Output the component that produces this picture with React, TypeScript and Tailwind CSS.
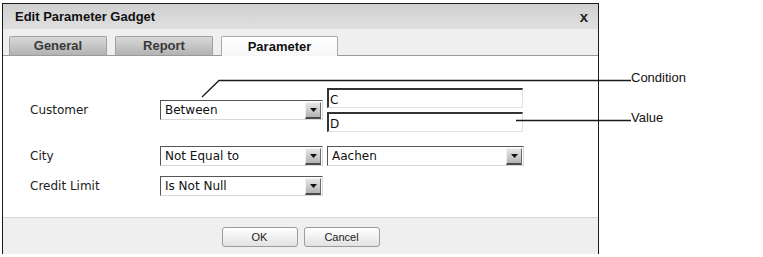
import React from "react";

const ui = { fontFamily: '"DejaVu Sans", Verdana, sans-serif' };
const arial = { fontFamily: '"Liberation Sans", Arial, sans-serif' };

function Arrow() {
  return (
    <div className="flex h-[17px] w-[16px] items-center justify-center border-b-2 border-r border-t border-l border-b-[#4a4a4a] border-r-[#6a6a6a] border-t-[#f4f4f4] border-l-[#f0f0f0] bg-gradient-to-b from-[#e6e6e6] to-[#b4b4b4]">
      <svg width="7" height="4" viewBox="0 0 7 4">
        <path d="M0 0H7L3.5 4Z" fill="#111" />
      </svg>
    </div>
  );
}

function Select({ value, width }: { value: string; width: string }) {
  return (
    <div
      className={`flex h-[20px] ${width} items-center justify-between border-l border-t border-b border-r border-l-[#555] border-t-[#555] border-b-[#d8d8d8] border-r-[#d8d8d8] bg-white pl-[4px] pr-[1px]`}
    >
      <span className="text-[12px] leading-none text-[#111]" style={ui}>
        {value}
      </span>
      <Arrow />
    </div>
  );
}

function TextBox({ value }: { value: string }) {
  return (
    <div className="flex h-[20px] w-[196px] items-end border-l-2 border-t-2 border-b border-r border-l-[#333] border-t-[#333] border-b-[#e2e2e2] border-r-[#e2e2e2] bg-white pb-[1px] pl-[1px]">
      <span className="text-[12px] leading-none text-[#111]" style={ui}>
        {value}
      </span>
    </div>
  );
}

function Tab({ label, active, width }: { label: string; active?: boolean; width: string }) {
  if (active) {
    return (
      <div className={`-mb-px flex h-[20px] ${width} items-center justify-center rounded-t-[2px] border border-b-0 border-[#a8a8a8] bg-gradient-to-b from-white to-[#f7f7f7]`}>
        <span className="text-[13px] font-bold text-[#111]" style={arial}>
          {label}
        </span>
      </div>
    );
  }
  return (
    <div className={`flex h-[19px] ${width} items-center justify-center rounded-t-[2px] border border-b-0 border-[#a0a0a0] bg-gradient-to-b from-[#d8d8d8] via-[#c6c6c6] to-[#b2b2b2]`}>
      <span className="text-[13px] font-bold text-[#3a3a3a]" style={arial}>
        {label}
      </span>
    </div>
  );
}

export default function App() {
  return (
    <div className="relative h-[257px] w-[763px] overflow-hidden bg-white">
      <div className="flex">
        <div className="ml-[2px] mt-[3px] flex w-[597px] flex-col border-x border-t border-[#1a1a1a]">
          <div className="flex h-[25px] items-center justify-between bg-gradient-to-b from-[#d0d0d0] to-[#e0e0e0] pl-[12px] pr-[10px]">
            <span className="text-[13px] font-bold text-[#111]" style={arial}>
              Edit Parameter Gadget
            </span>
            <span className="text-[15px] font-bold leading-none text-[#222]" style={arial}>
              x
            </span>
          </div>

          <div className="flex h-[27px] items-end gap-[8px] border-b border-[#9a9a9a] bg-[#efefef] pl-[6px]">
            <Tab label="General" width="w-[98px]" />
            <Tab label="Report" width="w-[98px]" />
            <Tab label="Parameter" width="w-[117px]" active />
          </div>

          <div className="flex h-[161px] flex-col bg-white pl-[27px] pt-[32px]" style={ui}>
            <div className="flex items-center">
              <span className="w-[130px] text-[12px] text-[#222]">Customer</span>
              <Select value="Between" width="w-[163px]" />
              <div className="ml-[4px] flex flex-col gap-[4px]">
                <TextBox value="C" />
                <TextBox value="D" />
              </div>
            </div>
            <div className="mt-[14px] flex items-center">
              <span className="w-[130px] text-[12px] text-[#222]">City</span>
              <Select value="Not Equal to" width="w-[163px]" />
              <div className="ml-[4px]">
                <Select value="Aachen" width="w-[197px]" />
              </div>
            </div>
            <div className="mt-[10px] flex items-center">
              <span className="w-[130px] text-[12px] text-[#222]">Credit Limit</span>
              <Select value="Is Not Null" width="w-[163px]" />
            </div>
          </div>

          <div className="flex h-[37px] justify-center gap-[6px] border-t border-[#d6d6d6] bg-[#efefef] pt-[9px]">
            <button className="h-[20px] w-[76px] rounded-[3px] border border-[#9c9c9c] bg-gradient-to-b from-white to-[#e2e2e2] text-[11px] text-[#222]" style={arial}>
              OK
            </button>
            <button className="h-[20px] w-[76px] rounded-[3px] border border-[#9c9c9c] bg-gradient-to-b from-white to-[#e2e2e2] text-[11px] text-[#222]" style={arial}>
              Cancel
            </button>
          </div>
        </div>

        <div className="ml-[32px] flex flex-col pt-[70px] text-[13px] leading-[15px] text-[#111]" style={arial}>
          <span>Condition</span>
          <span className="mt-[25px]">Value</span>
        </div>
      </div>

      <svg className="pointer-events-none absolute left-0 top-0" width="763" height="257">
        <path d="M202 97L219 80.5H631" fill="none" stroke="#1a1a1a" strokeWidth="1.3" />
        <path d="M516 120.5H631" fill="none" stroke="#1a1a1a" strokeWidth="1.3" />
      </svg>
    </div>
  );
}
